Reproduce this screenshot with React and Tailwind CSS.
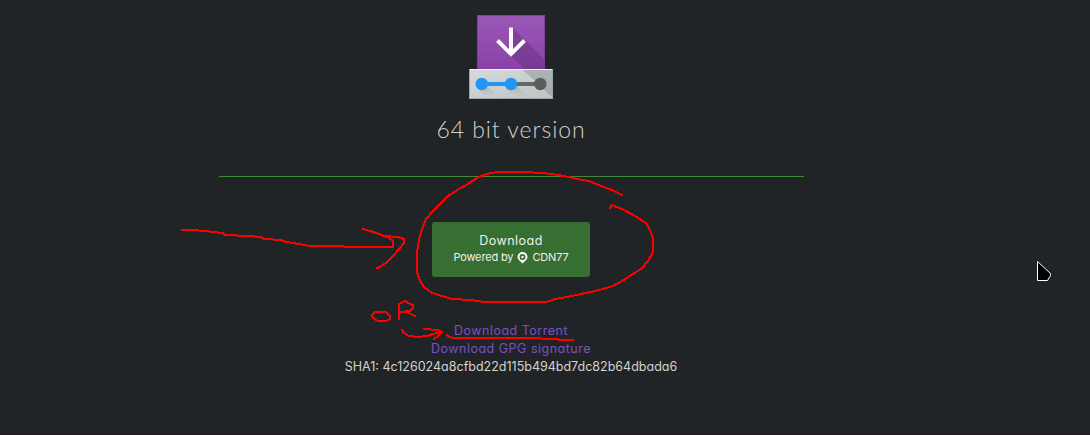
function InstallerIcon() {
  return (
    <svg className="block h-[84px] w-[84px]" viewBox="0 0 84 84" fill="none">
      <defs>
        <linearGradient id="box" x1="0" y1="0" x2="0" y2="1">
          <stop stopColor="#9b59b6" />
          <stop offset="1" stopColor="#8940a9" />
        </linearGradient>
        <linearGradient id="tray" x1="0" y1="0" x2="1" y2="1">
          <stop stopColor="#d6dadc" />
          <stop offset="1" stopColor="#bec3c5" />
        </linearGradient>
        <linearGradient id="fade" x1="0" y1="0" x2="0" y2="1">
          <stop stopColor="#8b9194" stopOpacity=".6" />
          <stop offset="1" stopColor="#a7adb0" stopOpacity="0" />
        </linearGradient>
      </defs>
      <rect x="8" y="0" width="68" height="55" fill="url(#box)" />
      <rect x="8.5" y="0.5" width="67" height="55" stroke="#733c87" strokeOpacity=".7" />
      <path d="M44 13L75 44V55H56L42 41Z" fill="#592c70" fillOpacity=".36" />
      <rect x="0" y="54" width="84" height="30" fill="url(#tray)" />
      <path d="M53 54H84V83Z" fill="#8d9598" fillOpacity=".5" />
      <path d="M8 73L17 82H29L17 70ZM37 73L46 82H58L46 69Z" fill="url(#fade)" />
      <path d="M0 54.5H84" stroke="#eff1f2" />
      <path d="M0 83.5H84M83.5 54V84M.5 54V84" stroke="#9ba6a8" />
      <path d="M42 69H71" stroke="#666" strokeWidth="4" />
      <circle cx="71.3" cy="69" r="6.2" fill="#5c5c5c" />
      <path d="M12.500 69H42" stroke="#2196f3" strokeWidth="4" />
      <circle cx="12.700" cy="69" r="6.200" fill="#2196f3" />
      <circle cx="42" cy="69" r="6.200" fill="#2196f3" />
      <path d="M42 12.500V39M28.500 25.500L42 39L55.500 25.500" stroke="#fff" strokeWidth="4" />
    </svg>
  );
}

function PinIcon() {
  return (
    <svg className="mx-1 h-[13px] w-[11px] shrink-0" viewBox="0 0 11 13">
      <path fillRule="evenodd" fill="#fff" d="M5.500 1A5 5 0 0 0 .5 6C.5 8.300 2.500 9.500 5.500 12.500C8.500 9.500 10.500 8.300 10.500 6A5 5 0 0 0 5.500 1ZM5.500 3A3 3 0 1 1 5.500 9A3 3 0 0 1 5.500 3Z" />
      <circle cx="5.500" cy="6" r="1.200" fill="#fff" />
    </svg>
  );
}

function Annotations() {
  return (
    <svg className="pointer-events-none absolute inset-0 h-[435px] w-[1090px]" viewBox="0 0 1090 435" fill="none">
      <g stroke="#ff0000" strokeWidth="2" strokeLinecap="square" strokeLinejoin="round" shapeRendering="crispEdges">
        <path d="M182 230H193L204 231L213 232L223 233L225 235L248 236L261 237L264 239L282 240L285 242L294 243L297 244L306 245L308 246H343L345 247H393V241L389 238L382 235L373 232L363 229" />
        <path d="M373 232L384 236L398 237L404 239V243L399 249L393 256L387 262L380 267L377 268" />
        <path d="M622 195L612 190L601 186L589 181L577 179L569 177L552 174L541 173L525 172H498L486 174L477 178L468 184L459 189L448 196L440 204L433 211L426 219L422 229L419 240L417 252V272L420 281L424 287L432 293L442 296L452 299L471 300L484 302H547L555 299L567 297L581 294L591 292L603 289L613 286L622 281L633 274L641 269L648 261L653 252V239L651 232L646 223L635 216L624 210L612 205L610 208" />
        <path d="M390 316L386 312L375 312L372 315L373 318L378 321H386L390 319ZM399 319V304L405 301L410 304L413 305V308L410 311L401 312H407L415 316" />
        <path d="M402 330L404 333L409 336L418 337L427 336L433 334L442 332L438 330L424 329M442 332L438 336L434 339M447 335L449 337L454 338H524L557 339L560 340H573" />
      </g>
      <path d="M1037.500 261.500V280.500H1047.500L1050.500 275.500V273.500Z" fill="#000" stroke="#fff" />
    </svg>
  );
}

export default function App() {
  return (
    <div className="relative h-[435px] w-[1090px] overflow-hidden border-b border-[#211b20] bg-[#202427] font-['Lato',sans-serif] text-[#d4d2cd]">
      <main className="flex w-[1022px] flex-col items-center pt-[15px]">
        <InstallerIcon />
        <h1 className="mt-[14px] h-8 whitespace-nowrap text-[23px] leading-8 font-light tracking-[0.95px]">64 bit version</h1>
        <hr className="mt-[31px] w-[585px] border-t border-[#3f8a37]" />
        <button className="mt-[45px] flex h-[55px] w-[158px] flex-col items-center rounded-[3px] bg-[#376e31] pt-[10px] font-['Inter',sans-serif] text-[#f0f0eb] [font-feature-settings:'cv11']">
          <span className="whitespace-nowrap text-[12.500px] leading-[18px] tracking-[0.5px]">Download</span>
          <span className="flex items-center whitespace-nowrap text-[11px] leading-[14px] tracking-[-0.15px]">
            Powered by<PinIcon />CDN77
          </span>
        </button>
        <div className="mt-[45px] flex flex-col items-center whitespace-nowrap font-['Inter',sans-serif] text-[12.500px] leading-[18px] [font-feature-settings:'cv11']">
          <a className="tracking-[0.5px] text-[#7a50c4]">Download Torrent</a>
          <a className="tracking-[0.5px] text-[#7a50c4]">Download GPG signature</a>
          <p className="tracking-[0px]">SHA1: 4c126024a8cfbd22d115b494bd7dc82b64dbada6</p>
        </div>
      </main>
      <Annotations />
    </div>
  );
}
